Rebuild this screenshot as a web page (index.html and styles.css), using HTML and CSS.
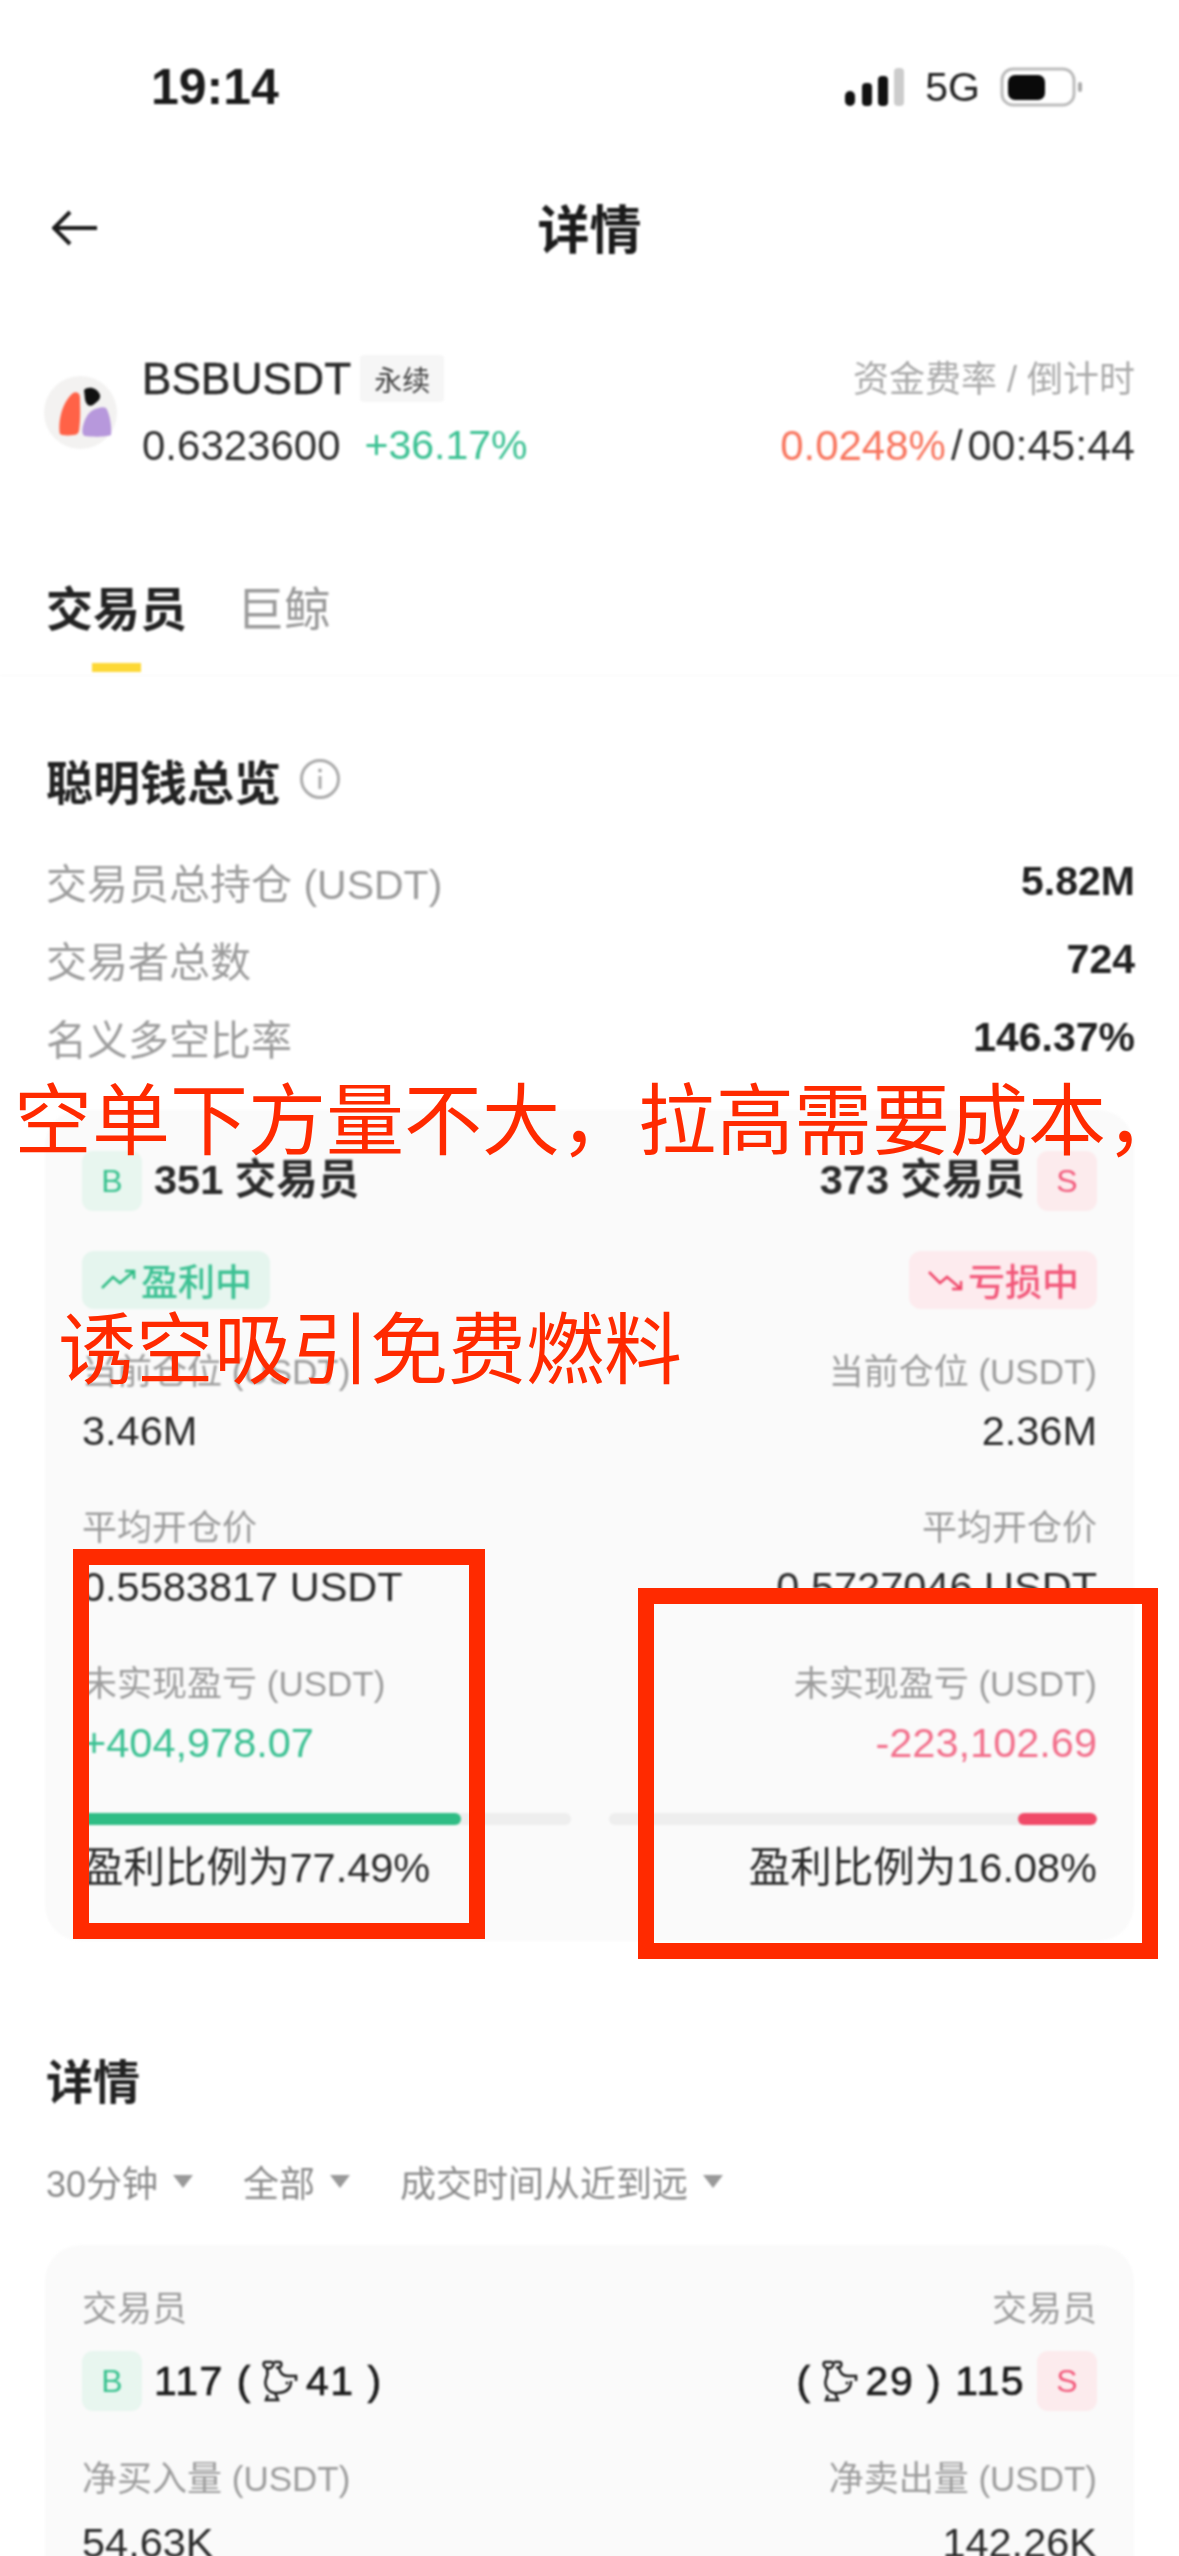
FILE: index.html
```html
<!DOCTYPE html>
<html lang="zh-CN">
<head>
<meta charset="utf-8">
<title>详情</title>
<link rel="stylesheet" href="styles.css">
</head>
<body>
<div class="page">
  <div class="app">
    <header class="status">
      <span class="time">19:14</span>
      <div class="status-right">
        <svg class="signal" width="60" height="38" viewBox="0 0 60 38"><rect x="0" y="23" width="10" height="15" rx="5" fill="#111"/><rect x="17" y="15" width="10" height="23" rx="4" fill="#111"/><rect x="33" y="8" width="10" height="30" rx="4" fill="#111"/><rect x="49" y="0" width="10" height="38" rx="4" fill="#ccc"/></svg>
        <span class="net">5G</span>
        <svg class="battery" width="84" height="40" viewBox="0 0 84 40"><rect x="2" y="2" width="72" height="36" rx="11" fill="none" stroke="#bbb" stroke-width="3"/><rect x="8" y="8" width="37" height="25" rx="7" fill="#0a0a0a"/><rect x="78" y="15" width="4" height="10" rx="2" fill="#aaa"/></svg>
      </div>
    </header>

    <nav class="nav">
      <svg class="back" width="46" height="36" viewBox="0 0 46 36"><path d="M45 18H3M18 2 2 18l16 16" fill="none" stroke="#1b1b1b" stroke-width="4"/></svg>
      <h1 class="nav-title">详情</h1>
    </nav>

    <section class="ticker">
      <svg class="coin" width="73" height="73" viewBox="0 0 73 73">
        <circle cx="36.500" cy="36.500" r="36.500" fill="#f3f2f1"/>
        <path d="M29 17c4-2 7 0 7 5 0 10 1 18-1 33-1 3-3 4-6 4-6 1-12 0-13-1-2-10 1-31 13-41z" fill="#ff6247"/>
        <path d="M40 14c4-4 13-3 16 5 1 4-3 7-7 10-5 2-7-1-8-6z" fill="#111"/>
        <path d="M41 60c-3-1-3-5-2-10 2-8 5-13 10-16 4-2 10-4 13-2 4 6 6 20 5 27-5 2-19 2-26 1z" fill="#b798dc"/>
      </svg>
      <div class="ticker-left">
        <div class="ticker-row">
          <span class="symbol">BSBUSDT</span>
          <span class="perp">永续</span>
        </div>
        <div class="ticker-row">
          <span class="price">0.6323600</span>
          <span class="change">+36.17%</span>
        </div>
      </div>
      <div class="ticker-right">
        <div class="funding-label">资金费率 / 倒计时</div>
        <div class="funding"><span class="funding-rate">0.0248%</span><span class="slash">/</span><span class="timer">00:45:44</span></div>
      </div>
    </section>

    <div class="tabs">
      <div class="tab tab-active">交易员<i class="tab-bar"></i></div>
      <div class="tab">巨鲸</div>
    </div>

    <section class="overview">
      <div class="overview-head">
        <h2 class="heading">聪明钱总览</h2>
        <svg width="42" height="42" viewBox="0 0 42 42"><circle cx="21" cy="21" r="18.500" fill="none" stroke="#aaa" stroke-width="3"/><path d="M21 18v13" stroke="#aaa" stroke-width="3"/><circle cx="21" cy="12.500" r="2" fill="#aaa"/></svg>
      </div>
      <div class="stat"><span class="muted">交易员总持仓 (USDT)</span><b>5.82M</b></div>
      <div class="stat"><span class="muted">交易者总数</span><b>724</b></div>
      <div class="stat"><span class="muted">名义多空比率</span><b>146.37%</b></div>
    </section>

    <section class="card card-summary">
      <div class="col">
        <div class="side"><span class="badge badge-buy">B</span><span class="side-text">351 交易员</span></div>
        <span class="pill pill-up"><svg width="38" height="24" viewBox="0 0 38 24"><path d="M2 20 13 9l7 6L33 4M25 3h9v8" fill="none" stroke="#2ebd85" stroke-width="2.500"/></svg>盈利中</span>
        <div class="label first">当前仓位 (USDT)</div><div class="value">3.46M</div>
        <div class="label">平均开仓价</div><div class="value">0.5583817 USDT</div>
        <div class="label">未实现盈亏 (USDT)</div><div class="value up">+404,978.07</div>
        <div class="bar"><i class="fill fill-up"></i></div>
        <div class="ratio">盈利比例为77.49%</div>
      </div>
      <div class="col col-end">
        <div class="side"><span class="side-text">373 交易员</span><span class="badge badge-sell">S</span></div>
        <span class="pill pill-down"><svg width="38" height="24" viewBox="0 0 38 24"><path d="M2 4l11 11 7-6 13 11M25 21h9v-8" fill="none" stroke="#f0476a" stroke-width="2.500"/></svg>亏损中</span>
        <div class="label first">当前仓位 (USDT)</div><div class="value">2.36M</div>
        <div class="label">平均开仓价</div><div class="value">0.5727046 USDT</div>
        <div class="label">未实现盈亏 (USDT)</div><div class="value down">-223,102.69</div>
        <div class="bar"><i class="fill fill-down"></i></div>
        <div class="ratio">盈利比例为16.08%</div>
      </div>
    </section>

    <section class="details">
      <h2 class="heading">详情</h2>
      <div class="filters">
        <span class="filter">30分钟<i class="caret"></i></span>
        <span class="filter">全部<i class="caret"></i></span>
        <span class="filter">成交时间从近到远<i class="caret"></i></span>
      </div>
    </section>

    <section class="card card-detail">
      <div class="col">
        <div class="label">交易员</div>
        <div class="side side-detail"><span class="badge badge-tall badge-buy">B</span><span class="side-text count">117 ( <svg class="whale" width="38" height="44" viewBox="0 0 38 44"><path d="M5 3h6c2 0 3 2 2 4l-2 2c-3 1-6 0-7-2-1-2 0-4 1-4zM14 3h5c3 0 3 4 1 5l-4 1M19 9c1 5 4 8 9 8h8v5M7 10c1 4 1 6-1 10-2 7 2 14 10 14 8 0 15-3 15-12M8 36l-2 5h12l-3-7" fill="none" stroke="#1b1b1b" stroke-width="2.500"/><circle cx="27" cy="24" r="1.500" fill="#1b1b1b"/></svg> 41 )</span></div>
        <div class="label net-label">净买入量 (USDT)</div><div class="value">54.63K</div>
      </div>
      <div class="col col-end">
        <div class="label">交易员</div>
        <div class="side side-detail"><span class="side-text count">( <svg class="whale" width="38" height="44" viewBox="0 0 38 44"><path d="M5 3h6c2 0 3 2 2 4l-2 2c-3 1-6 0-7-2-1-2 0-4 1-4zM14 3h5c3 0 3 4 1 5l-4 1M19 9c1 5 4 8 9 8h8v5M7 10c1 4 1 6-1 10-2 7 2 14 10 14 8 0 15-3 15-12M8 36l-2 5h12l-3-7" fill="none" stroke="#1b1b1b" stroke-width="2.500"/><circle cx="27" cy="24" r="1.500" fill="#1b1b1b"/></svg> 29 ) 115</span><span class="badge badge-tall badge-sell">S</span></div>
        <div class="label net-label">净卖出量 (USDT)</div><div class="value">142.26K</div>
      </div>
    </section>
  </div>

  <div class="note note-one">空单下方量不大，拉高需要成本，</div>
  <div class="note note-two">诱空吸引免费燃料</div>
  <div class="mark mark-left"></div>
  <div class="mark mark-right"></div>
</div>
</body>
</html>
```

FILE: styles.css
```css
* { box-sizing: border-box; }
html, body { margin: 0; padding: 0; background: #fff; }
.page {
  position: relative;
  width: 1179px;
  height: 2556px;
  overflow: hidden;
  background: #fff;
  font-family: "Liberation Sans", "Noto Sans CJK SC", sans-serif;
  color: #222;
}
.app { filter: blur(1px); }
h1, h2 { margin: 0; }

.status { height: 174px; display: flex; justify-content: space-between; align-items: center; padding: 0 95px 0 151px; }
.time { font-size: 50px; font-weight: 700; color: #1a1a1a; }
.status-right { display: flex; align-items: center; gap: 20px; }
.net { font-size: 41px; color: #222; }

.nav { position: relative; height: 108px; display: flex; align-items: center; justify-content: center; }
.back { position: absolute; left: 52px; top: 36px; }
.nav-title { font-size: 52px; font-weight: 700; color: #1a1a1a; margin-top: -4px; }

.ticker { display: flex; align-items: center; padding: 63px 44px 0 44px; }
.coin { flex: none; }
.ticker-left { margin-left: 25px; flex: 1; }
.ticker-row { height: 67px; display: flex; align-items: center; }
.symbol { font-size: 44px; color: #2a2a2a; letter-spacing: 0.2px; -webkit-text-stroke: 0.5px #2a2a2a; }
.perp { margin-left: 9px; width: 84px; height: 47px; display: flex; align-items: center; justify-content: center; background: #f6f6f6; border-radius: 4px; font-size: 28px; color: #444; }
.price { font-size: 42px; color: #333; }
.change { margin-left: 24px; font-size: 41px; color: #3cc193; }
.ticker-right { text-align: right; }
.funding-label { height: 61px; display: flex; align-items: center; justify-content: flex-end; font-size: 36px; color: #aaa; }
.funding { height: 73px; padding-top: 6px; display: flex; align-items: center; justify-content: flex-end; font-size: 42px; color: #333; }
.funding-rate { color: #f8765f; }
.slash { margin: 0 5px; }
.timer { font-size: 43px; }

.tabs { display: flex; gap: 50px; height: 197px; padding: 101px 46px 0; border-bottom: 1px solid #f9f9f9; }
.tab { position: relative; height: 60px; font-size: 47px; line-height: 60px; color: #999; }
.tab-active { font-weight: 700; color: #222; }
.tab-bar { position: absolute; left: 46px; top: 83px; width: 49px; height: 9px; background: #fdd835; }

.overview { padding: 0 44px 0 46px; }
.overview-head { display: flex; align-items: center; gap: 18px; height: 90px; margin-top: 58px; }
.heading { font-size: 47px; font-weight: 700; color: #222; }
.overview-head + .stat { margin-top: 18px; }
.stat { height: 78px; display: flex; justify-content: space-between; align-items: center; font-size: 41px; }
.stat b { font-size: 41px; color: #222; }
.muted { color: #9c9c9c; }

.card { display: grid; grid-template-columns: 1fr 1fr; column-gap: 38px; margin: 0 45px; padding: 0 37px; background: #fafafa; border-radius: 36px; }
.card-summary { height: 831px; margin-top: 34px; padding-top: 41px; }
.card-detail { height: 400px; margin-top: 0; padding-top: 39px; }
.col { display: flex; flex-direction: column; align-items: flex-start; min-width: 0; }
.col-end { align-items: flex-end; text-align: right; }

.side { display: flex; align-items: center; gap: 12px; height: 60px; }
.side-text { margin-bottom: 10px; font-size: 41.500px; font-weight: 700; color: #2b2b2b; white-space: nowrap; }
.badge { width: 60px; height: 60px; border-radius: 11px; display: flex; align-items: center; justify-content: center; font-size: 32px; }
.badge-buy { background: #e8f6ef; color: #39c28f; }
.badge-sell { background: #fcebed; color: #f2587a; }
.pill { display: flex; align-items: center; gap: 3px; margin-top: 40px; width: 188px; height: 58px; padding-left: 18px; border-radius: 12px; font-size: 37px; font-weight: 500; }
.pill-up { background: #e5f5ee; color: #3cc193; }
.pill-down { background: #fdebee; color: #f2587a; }

.label { height: 50px; line-height: 50px; margin-top: 38px; font-size: 35px; color: #9c9c9c; white-space: nowrap; }
.value { height: 68px; line-height: 68px; font-size: 41.500px; color: #2b2b2b; white-space: nowrap; }
.up { color: #3cc193; }
.down { color: #f2708c; }
.bar { width: 100%; height: 12px; margin-top: 36px; background: #eee; border-radius: 6px; overflow: hidden; display: flex; }
.col-end .bar { justify-content: flex-end; }
.fill { display: block; height: 100%; border-radius: 6px; }
.fill-up { width: 77.49%; background: #2fbd85; }
.fill-down { width: 16.08%; background: #f04a68; }
.ratio { margin-top: 18px; font-size: 41.500px; line-height: 50px; color: #2b2b2b; white-space: nowrap; }

.details { padding: 0 46px; }
.details .heading { margin-top: 108px; height: 68px; line-height: 68px; }
.filters { display: flex; gap: 50px; margin-top: 39px; height: 50px; align-items: center; font-size: 36px; color: #8c8c8c; }
.filter { display: flex; align-items: center; gap: 15px; }
.caret { width: 0; height: 0; border-left: 10px solid transparent; border-right: 10px solid transparent; border-top: 13px solid #999; }
.details + .card { margin-top: 39px; }

.card-detail .label { margin-top: 0; }
.side-detail { margin-top: 17px; }
.count { margin-bottom: 0; display: flex; align-items: center; gap: 8px; font-size: 41px; font-weight: 400; letter-spacing: 1.500px; color: #1b1b1b; -webkit-text-stroke: 0.7px #1b1b1b; }
.whale { flex: none; }
.card-detail .net-label { margin-top: 43px; }
.card-detail .value { margin-top: 5px; }

.note { position: absolute; font-family: "Noto Sans CJK SC", sans-serif; font-size: 78px; line-height: 100px; color: #ff2a00; white-space: nowrap; }
.note-one { left: 14px; top: 1065px; }
.note-two { left: 58px; top: 1294px; }
.mark { position: absolute; border: 16px solid #ff2a00; }
.mark-left { left: 73px; top: 1549px; width: 412px; height: 390px; }
.mark-right { left: 638px; top: 1588px; width: 520px; height: 371px; }
```
